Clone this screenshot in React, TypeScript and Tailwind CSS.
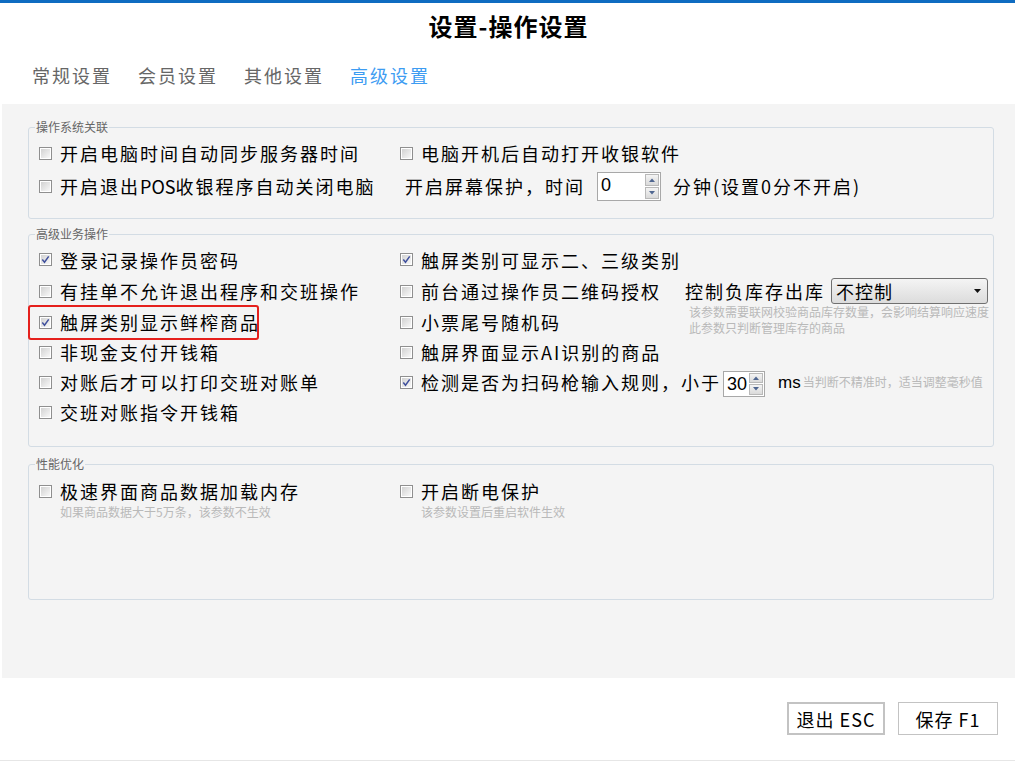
import React from "react";

function Box({ checked = false }: { checked?: boolean }) {
  return (
    <span className="inline-flex h-[13px] w-[13px] shrink-0 border border-[#8f8f8f] bg-white p-px">
      <span className="flex h-full w-full items-center justify-center bg-linear-to-br from-[#d2d2d2] to-[#f8f8f8]">
        {checked && (
          <svg width="9" height="9" viewBox="0 0 9 9">
            <path d="M1.3 4.6 L3.5 7.2 L7.7 1.4" fill="none" stroke="#3f4f9c" strokeWidth="1.5" />
          </svg>
        )}
      </span>
    </span>
  );
}

function Item({ label, checked = false }: { label: React.ReactNode; checked?: boolean }) {
  return (
    <div className="flex items-center">
      <Box checked={checked} />
      <span className="ml-[8px] whitespace-nowrap text-[18px] leading-none tracking-[2px] text-black">{label}</span>
    </div>
  );
}

function Arrow({ up }: { up: boolean }) {
  return (
    <span className="flex flex-1 items-center justify-center border border-[#b9b9b9] bg-linear-to-b from-[#f4f4f4] to-[#dadada]">
      <svg width="6" height="4" viewBox="0 0 6 4">
        {up ? <path d="M0 4 L3 0.5 L6 4 Z" fill="#4f6690" /> : <path d="M0 0 L3 3.5 L6 0 Z" fill="#4f6690" />}
      </svg>
    </span>
  );
}

function Spinner({ value, w, h }: { value: string; w: string; h: string }) {
  return (
    <div className={`flex shrink-0 border border-[#a8a8a8] bg-white ${w} ${h}`}>
      <span className="flex-1 pl-[3px] pt-[1px] font-['Liberation_Sans',sans-serif] text-[18px] leading-[22px] text-black">{value}</span>
      <div className="flex w-[16px] flex-col gap-px p-px">
        <Arrow up />
        <Arrow up={false} />
      </div>
    </div>
  );
}

function Hint({ children }: { children: React.ReactNode }) {
  return <div className="whitespace-nowrap text-[12px] leading-[16px] text-[#b9b9b9]">{children}</div>;
}

function Group({ title, children, extra = "" }: { title: string; children: React.ReactNode; extra?: string }) {
  return (
    <fieldset className={`m-0 min-w-0 rounded-[3px] border border-[#d3dce4] p-0 ${extra}`}>
      <legend className="ml-[6px] px-px text-[12px] leading-[16px] text-[#666]">{title}</legend>
      {children}
    </fieldset>
  );
}

export default function App() {
  return (
    <div className="flex h-[761px] w-[1015px] flex-col bg-white font-['Noto_Sans_CJK_SC',sans-serif]">
      <div className="h-[3px] bg-[#0f6cc1]" />
      <div className="flex h-[46px] items-center justify-center pl-[2px] text-[24px] font-bold leading-none tracking-[1px] text-black">
        设置-操作设置
      </div>
      <div className="flex h-[55px] items-center gap-[26px] pb-[4px] pl-[32px] text-[18px] leading-none tracking-[2px] text-[#666]">
        <span>常规设置</span>
        <span>会员设置</span>
        <span>其他设置</span>
        <span className="text-[#3d9cf2]">高级设置</span>
      </div>

      <div className="ml-[2px] h-[574px] bg-[#f4f4f4] pl-[26px] pr-[21px] pt-[15px]">
        <Group title="操作系统关联">
          <div className="grid grid-cols-[361px_1fr] pl-[10px] pt-[3px] pb-[17px]">
            <div className="flex h-[30px] items-center">
              <Item label="开启电脑时间自动同步服务器时间" />
            </div>
            <div className="flex h-[30px] items-center">
              <Item label="电脑开机后自动打开收银软件" />
            </div>
            <div className="mt-[3px] flex h-[30px] items-center">
              <Item
                label={
                  <>
                    开启退出<span className="tracking-[0px]">POS</span>收银程序自动关闭电脑
                  </>
                }
              />
            </div>
            <div className="mt-[3px] flex h-[30px] items-center">
              <span className="ml-[5px] whitespace-nowrap text-[18px] leading-none tracking-[2px] text-black">开启屏幕保护，时间</span>
              <span className="ml-[12px]">
                <Spinner value="0" w="w-[64px]" h="h-[29px]" />
              </span>
              <span className="ml-[12px] whitespace-nowrap text-[18px] leading-none tracking-[2px] text-black">分钟(设置0分不开启)</span>
            </div>
          </div>
        </Group>

        <Group title="高级业务操作" extra="mt-[7px]">
          <div className="grid grid-cols-[361px_1fr] pl-[10px] pt-[2px] pb-[19px]">
            <div className="flex h-[31px] items-center">
              <Item label="登录记录操作员密码" checked />
            </div>
            <div className="flex h-[31px] items-center">
              <Item label="触屏类别可显示二、三级类别" checked />
            </div>

            <div className="flex h-[32px] items-center">
              <Item label="有挂单不允许退出程序和交班操作" />
            </div>
            <div className="flex h-[32px] items-center">
              <div className="w-[285px]">
                <Item label="前台通过操作员二维码授权" />
              </div>
              <span className="whitespace-nowrap text-[18px] leading-none tracking-[2px] text-black">控制负库存出库</span>
              <div className="ml-[6px] flex h-[26px] w-[157px] items-center justify-between rounded-[3px] border border-[#707070] bg-linear-to-b from-[#f4f4f4] to-[#dcdcdc] pl-[4px] pr-[6px]">
                <span className="text-[18px] leading-none tracking-[1px] text-black">不控制</span>
                <svg width="7" height="4" viewBox="0 0 7 4">
                  <path d="M0 0 L7 0 L3.5 4 Z" fill="#111" />
                </svg>
              </div>
            </div>

            <div className="relative flex h-[30px] items-center">
              <Item label="触屏类别显示鲜榨商品" checked />
              <div className="pointer-events-none absolute left-[-11px] top-[-2px] h-[35px] w-[231px] rounded-[3px] border-[2.5px] border-[#e5201c]" />
            </div>
            <div className="flex h-[30px] items-center">
              <div className="w-[289px]">
                <Item label="小票尾号随机码" />
              </div>
              <div className="-mt-[4px]">
                <Hint>该参数需要联网校验商品库存数量，会影响结算响应速度</Hint>
                <Hint>此参数只判断管理库存的商品</Hint>
              </div>
            </div>

            <div className="flex h-[30px] items-center">
              <Item label="非现金支付开钱箱" />
            </div>
            <div className="flex h-[30px] items-center">
              <Item label="触屏界面显示AI识别的商品" />
            </div>

            <div className="flex h-[30px] items-center">
              <Item label="对账后才可以打印交班对账单" />
            </div>
            <div className="flex h-[30px] items-center">
              <Item label="检测是否为扫码枪输入规则，小于" checked />
              <span className="ml-[2px] mt-[3px]">
                <Spinner value="30" w="w-[42px]" h="h-[26px]" />
              </span>
              <span className="ml-[13px] font-['Liberation_Sans',sans-serif] text-[17px] leading-none text-black">ms</span>
              <span className="ml-[2px] whitespace-nowrap text-[12px] leading-none text-[#b9b9b9]">当判断不精准时，适当调整毫秒值</span>
            </div>

            <div className="flex h-[30px] items-center">
              <Item label="交班对账指令开钱箱" />
            </div>
            <div className="h-[30px]" />
          </div>
        </Group>

        <Group title="性能优化" extra="mt-[9px] h-[144px]">
          <div className="grid grid-cols-[361px_1fr] pl-[10px] pt-[4px]">
            <div>
              <div className="flex h-[30px] items-center">
                <Item label="极速界面商品数据加载内存" />
              </div>
              <div className="-mt-[2px] pl-[21px]">
                <Hint>如果商品数据大于5万条，该参数不生效</Hint>
              </div>
            </div>
            <div>
              <div className="flex h-[30px] items-center">
                <Item label="开启断电保护" />
              </div>
              <div className="-mt-[2px] pl-[21px]">
                <Hint>该参数设置后重启软件生效</Hint>
              </div>
            </div>
          </div>
        </Group>
      </div>

      <div className="flex flex-1 items-start justify-end gap-[13px] border-b border-[#e6e6e6] pr-[17px] pt-[24px]">
        <button className="flex h-[33px] w-[98px] items-center justify-center border-2 border-[#c3c3c3] bg-white text-[18px] leading-none tracking-[1px] text-black">
          退出 ESC
        </button>
        <button className="flex h-[33px] w-[100px] items-center justify-center border border-[#c3c3c3] bg-white text-[18px] leading-none tracking-[1px] text-black">
          保存 F1
        </button>
      </div>
    </div>
  );
}
